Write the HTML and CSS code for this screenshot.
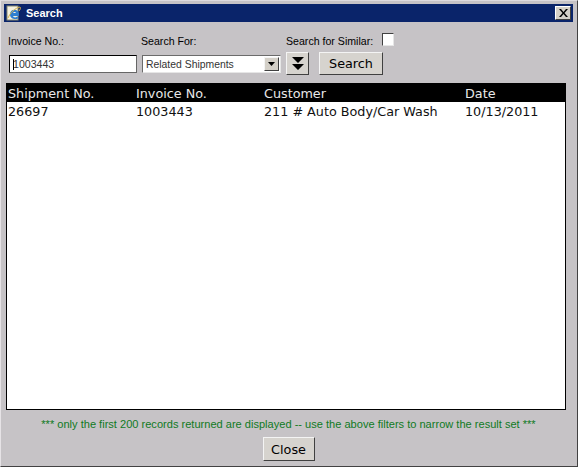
FILE: index.html
```html
<!DOCTYPE html>
<html lang="en">
<head>
    <meta charset="UTF-8">
    <meta name="viewport" content="width=device-width, initial-scale=1.0">
    <title>Search</title>
    <link rel="stylesheet" href="styles.css">
</head>
<body>

<div class="window">
    <div class="titlebar">
        <svg class="app-icon" width="16" height="16" viewBox="0 0 16 16">
            <rect x="1" y="1" width="11" height="14" fill="#f4f1e0" stroke="#8a8a70" stroke-width="1"/>
            <path d="M4 9.5a4.5 4.5 0 1 1 8.6 1.5H7c.3 1.6 2.9 1.9 4.4.6l1 1.6C9.6 15 4 14 4 9.5zM7 8h3c-.2-1.5-2.7-1.5-3 0z" fill="#2f7fd0"/>
            <path d="M2 13C4 8 9 3 14 2c1 .6 0 3-1 4" fill="none" stroke="#d8b24a" stroke-width="1"/>
        </svg>
        <span class="title">Search</span>
        <button type="button" class="close-x" aria-label="Close">
            <svg width="9" height="8" viewBox="0 0 9 8"><path d="M0 0h2l2.5 3L7 0h2L5.500 4 9 8H7L4.500 5 2 8H0l3.500-4z" fill="#000"/></svg>
        </button>
    </div>

    <div class="content">
        <form class="filters">
            <div class="field field-invoice">
                <label for="invoice">Invoice No.:</label>
                <div class="input-wrap">
                    <input id="invoice" type="text" value="1003443">
                    <span class="caret"></span>
                </div>
            </div>
            <div class="field field-for">
                <label for="search-for">Search For:</label>
                <div class="select" id="search-for">
                    <span>Related Shipments</span>
                    <span class="select-arrow"><svg width="7" height="4" viewBox="0 0 7 4"><path d="M0 0h7L3.500 4z" fill="#000"/></svg></span>
                </div>
            </div>
            <div class="field field-actions">
                <div class="similar">
                    <span>Search for Similar:</span>
                    <span class="checkbox"></span>
                </div>
                <div class="actions">
                    <button type="button" class="btn btn-more" aria-label="More filters">
                        <svg width="12" height="13" viewBox="0 0 12 13"><path d="M0 0h12L6 6zM0 7h12L6 13z" fill="#000"/></svg>
                    </button>
                    <button type="button" class="btn btn-search">Search</button>
                </div>
            </div>
        </form>

        <div class="results">
            <div class="row row-head">
                <div>Shipment No.</div>
                <div>Invoice No.</div>
                <div>Customer</div>
                <div>Date</div>
            </div>
            <div class="row">
                <div>26697</div>
                <div>1003443</div>
                <div>211 # Auto Body/Car Wash</div>
                <div>10/13/2011</div>
            </div>
        </div>

        <p class="notice">*** only the first 200 records returned are displayed -- use the above filters to narrow the result set ***</p>
        <div class="footer">
            <button type="button" class="btn btn-close">Close</button>
        </div>
    </div>
</div>

</body>
</html>
```

FILE: styles.css
```css
* {
    box-sizing: border-box;
}
body {
    margin: 0;
    font-family: 'Liberation Sans', Arial, sans-serif;
    background-color: #c6c3c6;
}
.window {
    width: 578px;
    height: 467px;
    display: flex;
    flex-direction: column;
    padding: 3px 4px 4px 3px;
    background-color: #c6c3c6;
    border-top: 1px solid #dedbde;
    border-left: 1px solid #e6e3e6;
    border-right: 1px solid #424142;
    border-bottom: 1px solid #424142;
}
.titlebar {
    height: 18px;
    flex: none;
    display: flex;
    align-items: center;
    padding: 0 2px;
    background-color: #0a246a;
    color: white;
}
.app-icon {
    flex: none;
}
.title {
    margin-left: 4px;
    font-size: 11px;
    font-weight: bold;
}
.close-x {
    margin-left: auto;
    width: 16px;
    height: 14px;
    padding: 0;
    display: flex;
    align-items: center;
    justify-content: center;
    background-color: #d4d0c8;
    border: 1px solid;
    border-color: #ffffff #404040 #404040 #ffffff;
}
.content {
    flex: 1;
    display: flex;
    flex-direction: column;
    padding: 0 2px;
}
.filters {
    height: 61px;
    flex: none;
    display: flex;
    padding-left: 2px;
    font-size: 10.6px;
    color: #000;
}
.field {
    display: flex;
    flex-direction: column;
}
.field label {
    height: 33px;
    padding-top: 13px;
}
.field-invoice {
    width: 133px;
}
.input-wrap {
    position: relative;
    width: 128px;
    height: 18px;
    margin-left: 1px;
}
.input-wrap input {
    width: 100%;
    height: 100%;
    padding: 0 0 0 3px;
    font: 10.6px 'Liberation Sans', Arial, sans-serif;
    color: #333;
    border: 1px solid #000;
    border-right-color: #666;
    border-bottom-color: #666;
    background-color: white;
    border-radius: 0;
    outline: none;
}
.caret {
    position: absolute;
    left: 4px;
    top: 4px;
    width: 1px;
    height: 11px;
    background-color: #000;
}
.field-for {
    width: 145px;
}
.select {
    width: 139px;
    height: 18px;
    margin-left: 1px;
    display: flex;
    align-items: center;
    justify-content: space-between;
    padding: 0 1px 0 3px;
    background-color: white;
    border: 1px solid;
    border-color: #6b6b6b #e6e6e6 #e6e6e6 #6b6b6b;
    font-size: 10.4px;
    color: #333;
}
.select-arrow {
    width: 15px;
    height: 14px;
    display: flex;
    align-items: center;
    justify-content: center;
    background-color: #d4d0c8;
    border: 1px solid;
    border-color: #f4f4f4 #404040 #404040 #f4f4f4;
}
.similar {
    height: 30px;
    display: flex;
    align-items: flex-start;
    padding-top: 12px;
    line-height: 14px;
}
.checkbox {
    width: 12px;
    height: 13px;
    margin-left: 9px;
    margin-top: -1px;
    background-color: white;
    border: 1px solid;
    border-color: #404040 #e6e6e6 #e6e6e6 #404040;
}
.actions {
    display: flex;
    gap: 10px;
}
.btn {
    height: 23px;
    padding: 0;
    display: flex;
    align-items: center;
    justify-content: center;
    background-color: #d6d3ce;
    font-family: 'DejaVu Sans', sans-serif;
    font-size: 12.8px;
    color: #000;
    border: 1px solid;
    border-color: #f4f4f4 #404040 #404040 #f4f4f4;
}
.btn-more {
    width: 23px;
}
.btn-search {
    width: 64px;
}
.results {
    width: 560px;
    height: 327px;
    flex: none;
    background-color: white;
    border: 1px solid #000;
    font-family: 'DejaVu Sans', sans-serif;
    font-size: 12.75px;
    color: #111;
}
.row {
    height: 18px;
    display: grid;
    grid-template-columns: 128px 128px 201px 1fr;
    align-items: center;
    padding-left: 1px;
}
.row-head {
    background-color: #000;
    color: #e8e8e8;
}
.notice {
    margin: 8px 0 0;
    height: 13px;
    line-height: 13px;
    text-align: center;
    font-size: 11.07px;
    color: #0f7a1e;
}
.footer {
    margin-top: 6px;
    display: flex;
    justify-content: center;
}
.btn-close {
    width: 52px;
    height: 24px;
}
```
